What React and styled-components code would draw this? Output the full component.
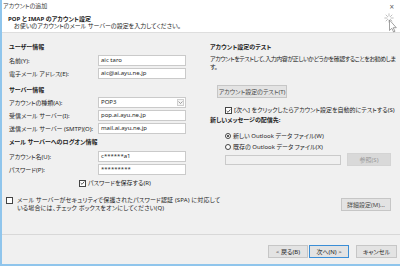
import React from "react";
import styled, { createGlobalStyle } from "styled-components";

const GlobalStyle = createGlobalStyle`
    html, body {
        margin: 0;
        padding: 0;
        background: #ffffff;
    }
    body {
        font-family: "Noto Sans", "Noto Sans CJK JP", sans-serif;
        font-size: 6px;
        font-feature-settings: "palt";
        color: #1e1e1e;
    }
`;

// Window frame with the light blue edge on the left and bottom
const Window = styled.div`
    position: relative;
    width: 400px;
    height: 266px;
    box-sizing: border-box;
    border-left: 2px solid #8fc5ec;
    border-bottom: 2px solid #8fc5ec;
    background: #f0f0f0;
    display: flex;
    flex-direction: column;
    overflow: hidden;
`;

const Top = styled.div`
    flex-shrink: 0;
    height: 32px;
    background: #ffffff;
    border-bottom: 1px solid #dedede;
`;

const TitleRow = styled.div`
    display: flex;
    justify-content: space-between;
    height: 13px;
    line-height: 13px;
    padding: 0 6px 0 1px;
    color: #3c3c3c;
`;

const Close = styled.span`
    font-size: 8px;
    color: #666;
`;

const HeaderTitle = styled.div`
    margin: 3px 0 0 6px;
    line-height: 7px;
    font-weight: 700;
`;

const HeaderSub = styled.div`
    margin-left: 12px;
    line-height: 7px;
`;

const Body = styled.div`
    flex-shrink: 0;
    height: 201px;
    box-sizing: border-box;
    display: flex;
    gap: 24px;
    padding: 9px 9px 0 7px;
`;

const Column = styled.div`
    width: ${(p) => p.$w}px;
    display: flex;
    flex-direction: column;
`;

const SectionTitle = styled.div`
    line-height: 10px;
    font-weight: 700;
    margin-top: ${(p) => p.$mt || 0}px;
    white-space: nowrap;
`;

const FieldRow = styled.div`
    display: grid;
    grid-template-columns: 89px 88px;
    align-items: center;
    height: 11px;
    margin-top: ${(p) => p.$mt || 0}px;
`;

const Label = styled.span`
    white-space: nowrap;
`;

const TextBox = styled.div`
    height: ${(p) => p.$h || 11}px;
    width: ${(p) => (p.$w ? `${p.$w}px` : "auto")};
    box-sizing: border-box;
    border: 1px solid #cacaca;
    background: ${(p) => (p.$disabled ? "#f0f0f0" : "#ffffff")};
    padding: 0 2px;
    line-height: 9px;
    white-space: nowrap;
`;

const Select = styled(TextBox)`
    display: flex;
    justify-content: space-between;
    align-items: center;
    padding-right: 1px;
`;

const DropArrow = styled.span`
    width: 7px;
    height: 7px;
    box-sizing: border-box;
    border: 1px solid #d0d0d0;
    background: #f4f4f4;
    display: flex;
    align-items: center;
    justify-content: center;
`;

const CheckRow = styled.div`
    display: flex;
    align-items: center;
    gap: 2px;
    line-height: ${(p) => p.$lh || 10}px;
    margin-top: ${(p) => p.$mt || 0}px;
    padding-left: ${(p) => p.$indent || 0}px;
    white-space: nowrap;
`;

const Box = styled.span`
    flex-shrink: 0;
    width: 7px;
    height: 7px;
    box-sizing: border-box;
    border: 1px solid #444;
    background: #fff;
    display: flex;
    align-items: center;
    justify-content: center;
`;

const SpaRow = styled.div`
    display: flex;
    align-items: flex-start;
    gap: 4px;
    margin-top: 8px;
    white-space: nowrap;
`;

const SpaText = styled.div`
    line-height: 8px;
    letter-spacing: 0.15px;
`;

const SpaBox = styled(Box)`
    margin-top: 1px;
    margin-left: -3px;
`;

const Desc = styled.div`
    line-height: 8px;
    margin-top: 3px;
    white-space: nowrap;
    letter-spacing: -0.45px;
`;

const Button = styled.div`
    width: ${(p) => p.$w}px;
    height: 13px;
    box-sizing: border-box;
    display: flex;
    align-items: center;
    justify-content: center;
    border: 1px solid ${(p) => (p.$primary ? "#3b8ed6" : p.$disabled ? "#d4d4d4" : "#c6c6c6")};
    background: ${(p) => (p.$disabled ? "#d9d9d9" : "#e3e3e3")};
    color: ${(p) => (p.$disabled ? "#9a9a9a" : p.$muted ? "#4a4a4a" : "#1e1e1e")};
    margin-top: ${(p) => p.$mt || 0}px;
    margin-left: ${(p) => p.$ml || 0}px;
    align-self: ${(p) => (p.$right ? "flex-end" : "flex-start")};
    white-space: nowrap;
    flex-shrink: 0;
`;

const RadioRow = styled.div`
    display: flex;
    align-items: center;
    gap: 2px;
    height: 11px;
    padding-left: 15px;
    margin-top: ${(p) => p.$mt || 0}px;
    white-space: nowrap;
`;

const RadioCircle = styled.span`
    width: 6px;
    height: 6px;
    box-sizing: border-box;
    border-radius: 50%;
    border: 1px solid #444;
    background: #fff;
    display: flex;
    align-items: center;
    justify-content: center;

    &::after {
        content: "";
        width: 2px;
        height: 2px;
        border-radius: 50%;
        background: ${(p) => (p.$on ? "#222" : "transparent")};
    }
`;

const BrowseRow = styled.div`
    display: flex;
    align-items: center;
    gap: 6px;
    padding-left: 15px;
    margin-top: 1px;
`;

const Footer = styled.div`
    flex-shrink: 0;
    height: 30px;
    box-sizing: border-box;
    border-top: 1px solid #d8d8d8;
    display: flex;
    justify-content: flex-end;
    align-items: flex-start;
    gap: 1px;
    padding: 10px 3px 0 0;
`;

const Spacer = styled.span`
    width: 5px;
`;

// busy cursor over the top-right corner
const Cursor = styled.svg`
    position: absolute;
    top: 13px;
    right: 2px;
`;

const Tick = () => (
    <svg width="6" height="6" viewBox="0 0 6 6">
        <path d="M0.8 3 L2.4 4.6 L5.2 1.2" fill="none" stroke="#222" strokeWidth="0.9" />
    </svg>
);

const Chevron = () => (
    <svg width="5" height="3" viewBox="0 0 5 3">
        <path d="M0.5 0.5 L2.5 2.5 L4.5 0.5" fill="none" stroke="#777" strokeWidth="0.7" />
    </svg>
);

const leftFields = [
    { section: "ユーザー情報", mt: 0 },
    { label: "名前(Y):", value: "aic taro", mt: 3 },
    { label: "電子メール アドレス(E):", value: "aic@ai.ayu.ne.jp", mt: 2 },
    { section: "サーバー情報", mt: 6 },
    { label: "アカウントの種類(A):", value: "POP3", select: true, mt: 2 },
    { label: "受信メール サーバー(I):", value: "pop.ai.ayu.ne.jp", mt: 2 },
    { label: "送信メール サーバー (SMTP)(O):", value: "mail.ai.ayu.ne.jp", mt: 2 },
    { section: "メール サーバーへのログオン情報", mt: 3 },
    { label: "アカウント名(U):", value: "c******a1", mt: 4 },
    { label: "パスワード(P):", value: "*********", mt: 2 },
];

export default function App() {
    const spokes = Array.from({ length: 8 }, (_, i) => (i * Math.PI) / 4);

    return (
        <>
            <GlobalStyle />
            <Window>
                <Top>
                    <TitleRow>
                        <span>アカウントの追加</span>
                        <Close>×</Close>
                    </TitleRow>
                    <HeaderTitle>POP と IMAP のアカウント設定</HeaderTitle>
                    <HeaderSub>お使いのアカウントのメール サーバーの設定を入力してください。</HeaderSub>
                </Top>

                <Body>
                    <Column $w={177}>
                        {leftFields.map((f) =>
                            f.section ? (
                                <SectionTitle key={f.section} $mt={f.mt}>{f.section}</SectionTitle>
                            ) : (
                                <FieldRow key={f.label} $mt={f.mt}>
                                    <Label>{f.label}</Label>
                                    {f.select ? (
                                        <Select>
                                            <span>{f.value}</span>
                                            <DropArrow><Chevron /></DropArrow>
                                        </Select>
                                    ) : (
                                        <TextBox>{f.value}</TextBox>
                                    )}
                                </FieldRow>
                            )
                        )}
                        <CheckRow $mt={3} $indent={70}>
                            <Box><Tick /></Box>
                            <span>パスワードを保存する(R)</span>
                        </CheckRow>
                        <SpaRow>
                            <SpaBox />
                            <SpaText>
                                メール サーバーがセキュリティで保護されたパスワード認証 (SPA) に対応して
                                <br />
                                いる場合には、チェック ボックスをオンにしてください(Q)
                            </SpaText>
                        </SpaRow>
                    </Column>

                    <Column $w={181}>
                        <SectionTitle>アカウント設定のテスト</SectionTitle>
                        <Desc>
                            アカウントをテストして、入力内容が正しいかどうかを確認することをお勧めしま
                            <br />
                            す。
                        </Desc>
                        <Button $w={70} $mt={14} $ml={7} $muted>アカウント設定のテスト(T)</Button>
                        <CheckRow $mt={8} $lh={9} $indent={15}>
                            <Box><Tick /></Box>
                            <span>[次へ] をクリックしたらアカウント設定を自動的にテストする(S)</span>
                        </CheckRow>
                        <SectionTitle>新しいメッセージの配信先:</SectionTitle>
                        <RadioRow $mt={5}>
                            <RadioCircle $on />
                            <span>新しい Outlook データ ファイル(W)</span>
                        </RadioRow>
                        <RadioRow>
                            <RadioCircle />
                            <span>既存の Outlook データ ファイル(X)</span>
                        </RadioRow>
                        <BrowseRow>
                            <TextBox $w={116} $h={10} $disabled />
                            <Button $w={44} $disabled>参照(S)</Button>
                        </BrowseRow>
                        <Button $w={50} $mt={32} $right $muted>詳細設定(M)...</Button>
                    </Column>
                </Body>

                <Footer>
                    <Button $w={40}>&lt; 戻る(B)</Button>
                    <Button $w={40} $primary>次へ(N) &gt;</Button>
                    <Spacer />
                    <Button $w={41}>キャンセル</Button>
                </Footer>

                <Cursor width="14" height="20" viewBox="0 0 14 20">
                    {spokes.map((a, i) => (
                        <line
                            key={i}
                            x1={5 + Math.cos(a) * 1.6}
                            y1={5 + Math.sin(a) * 1.6}
                            x2={5 + Math.cos(a) * 4.6}
                            y2={5 + Math.sin(a) * 4.6}
                            stroke="#b8b8b8"
                            strokeWidth="0.9"
                        />
                    ))}
                    <path
                        d="M5.5 7 L5.5 17.5 L7.8 15.3 L9.6 19 L11 18.3 L9.2 14.7 L12.3 14.7 Z"
                        fill="#ffffff"
                        stroke="#7a7a7a"
                        strokeWidth="0.7"
                    />
                </Cursor>
            </Window>
        </>
    );
}
